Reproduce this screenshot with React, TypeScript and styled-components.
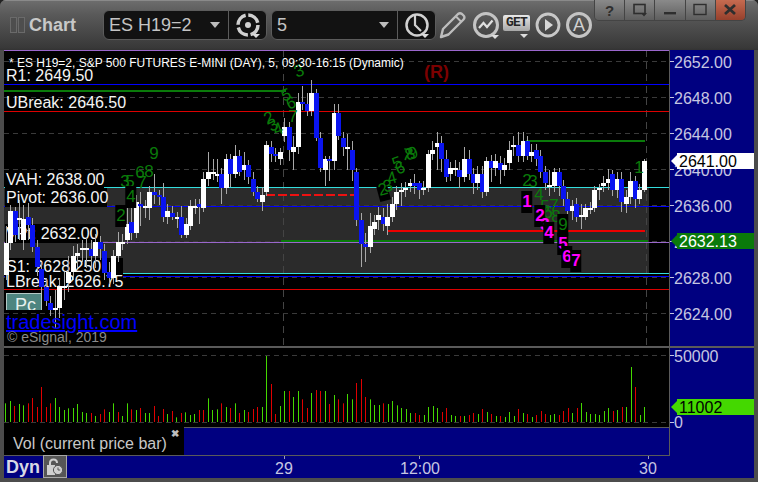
import React from "react";
import styled, { createGlobalStyle } from "styled-components";

const FONT = `"Liberation Sans", Arial, sans-serif`;
const OX = 4;
const OY = 50;

const Global = createGlobalStyle`
  html, body { margin: 0; padding: 0; background: #222; }
  body { font-family: ${FONT}; }
`;

const Frame = styled.div`
  position: relative;
  width: 758px;
  height: 482px;
  box-sizing: border-box;
  padding: 0 4px 4px;
  background: #4c4c4c;
  border-radius: 6px 6px 0 0;
  overflow: hidden;
  display: flex;
  flex-direction: column;
  font-family: ${FONT};
`;
const TitleBar = styled.div`
  height: 50px;
  margin: 0 -4px;
  padding: 0 0 0 10px;
  flex: none;
  display: flex;
  align-items: center;
  background: linear-gradient(#6e6e6e 0, #5a5a5a 14px, #383838 48px, #333 50px);
  box-shadow: inset 0 1px 0 #8a8a8a;
`;
const Grip = styled.span`
  width: 5px;
  height: 14px;
  margin-right: 1px;
  border: 1px solid #6a6a6a;
  background: #4e4e4e;
`;
const ChartTitle = styled.span`
  margin: 0 27px 0 3px;
  font-size: 18px;
  font-weight: 700;
  color: #c8c8c8;
`;
const Combo = styled.div<{ $w: number }>`
  width: ${(p) => p.$w}px;
  height: 30px;
  box-sizing: border-box;
  margin-right: 4px;
  flex: none;
  display: flex;
  align-items: center;
  background: #121212;
  border: 1px solid #5c5c5c;
  border-radius: 6px;
`;
const ComboText = styled.span`
  flex: 1;
  padding-left: 5px;
  font-size: 18px;
  color: #c4c4c4;
  white-space: nowrap;
`;
const ComboArrow = styled.span`
  width: 0;
  height: 0;
  margin-right: 8px;
  border-left: 5px solid transparent;
  border-right: 5px solid transparent;
  border-top: 6px solid #bdbdbd;
`;
const ComboIcon = styled.span`
  width: 37px;
  height: 28px;
  flex: none;
  border-left: 1px solid #5c5c5c;
  display: flex;
  align-items: center;
  justify-content: center;
`;
const ToolIcon = styled.svg<{ $ml?: number }>`
  flex: none;
  margin-left: ${(p) => p.$ml ?? 0}px;
`;
const GetWrap = styled.div`
  position: relative;
  width: 28px;
  height: 30px;
  margin-left: 1px;
  flex: none;
`;
const GetBadge = styled.span`
  position: absolute;
  left: 0;
  top: 5px;
  width: 27px;
  height: 16px;
  border-radius: 2px;
  background: linear-gradient(#e8e8e8, #a8a8a8);
  color: #262626;
  font: 700 13px/16px "Liberation Mono", monospace;
  letter-spacing: -0.8px;
  text-align: center;
`;
const GetArrow = styled.span`
  position: absolute;
  left: 17px;
  top: 24px;
  width: 0;
  height: 0;
  border-left: 4px solid transparent;
  border-right: 4px solid transparent;
  border-top: 4px solid #ddd;
`;
const AIcon = styled.div`
  position: relative;
  width: 26px;
  height: 26px;
  margin-left: 5px;
  flex: none;
  box-sizing: border-box;
  border: 3px solid #c4c4c4;
  border-radius: 50%;
  background: transparent;
  color: #d0d0d0;
  font-size: 18px;
  line-height: 20px;
  text-align: center;
`;
const WinButtons = styled.div`
  position: absolute;
  left: 594px;
  top: 0;
  width: 152px;
  height: 21px;
  display: flex;
  border-radius: 0 0 5px 5px;
  overflow: hidden;
  border: 1px solid #444;
  border-top: none;
  box-sizing: border-box;
`;
const WinBtn = styled.div<{ $close?: boolean }>`
  flex: 1;
  display: flex;
  align-items: center;
  justify-content: center;
  font-size: 15px;
  font-weight: 700;
  color: #2e2e2e;
  border-left: 1px solid #444;
  &:first-child { border-left: none; }
  background: ${(p) =>
    p.$close
      ? "linear-gradient(#c66b50, #96402c)"
      : "linear-gradient(#8a8a8a, #5e5e5e)"};
`;

const PriceRow = styled.div`
  display: flex;
  height: 296px;
  flex: none;
`;
const Canvas = styled.div`
  position: relative;
  width: 665px;
  height: 296px;
  flex: none;
  background: #000;
  overflow: hidden;
`;
const Layer = styled.svg`
  position: absolute;
  left: 0;
  top: 0;
`;
const Axis = styled.div`
  position: relative;
  flex: 1;
  background: #000080;
  border-left: 1px solid #5a5a5a;
`;
const AxisText = styled.span<{ $y: number }>`
  position: absolute;
  left: 4px;
  top: ${(p) => p.$y - 8}px;
  font-size: 16px;
  line-height: 18px;
  color: #c6c6e2;
`;
const AxisTick = styled.span<{ $y: number }>`
  position: absolute;
  left: 0;
  top: ${(p) => p.$y}px;
  width: 4px;
  height: 1px;
  background: #c6c6e2;
`;
const PriceTag = styled.div<{ $y: number; $bg: string; $fg: string }>`
  position: absolute;
  left: 7px;
  top: ${(p) => p.$y - 8}px;
  right: 0;
  height: 16px;
  padding-left: 2px;
  background: ${(p) => p.$bg};
  color: ${(p) => p.$fg};
  font-size: 16px;
  line-height: 18px;
  &::before {
    content: "";
    position: absolute;
    left: -6px;
    top: 2px;
    border-top: 6px solid transparent;
    border-bottom: 6px solid transparent;
    border-right: 6px solid ${(p) => p.$bg};
  }
`;
const ChartHeader = styled.div`
  position: absolute;
  left: 5px;
  top: 6px;
  font-size: 12px;
  line-height: 14px;
  color: #fff;
  white-space: nowrap;
`;
const RMark = styled.span`
  position: absolute;
  left: 420px;
  top: 12px;
  font-size: 18px;
  font-weight: 700;
  line-height: 20px;
  color: #7c0000;
`;
const LevelLabel = styled.span<{ $x: number; $y: number; $w: number; $h: number }>`
  position: absolute;
  left: ${(p) => p.$x}px;
  top: ${(p) => p.$y}px;
  width: ${(p) => p.$w}px;
  height: ${(p) => p.$h}px;
  padding-left: 1px;
  box-sizing: border-box;
  background: #000;
  color: #f4f4f4;
  font-size: 16px;
  line-height: ${(p) => p.$h + 1}px;
  white-space: nowrap;
`;
const PlainLabel = styled(LevelLabel)`
  background: transparent;
`;
const Digit = styled.span<{ $x: number; $y: number; $pink?: boolean; $rot?: number; $box?: boolean }>`
  position: absolute;
  left: ${(p) => p.$x}px;
  top: ${(p) => p.$y}px;
  transform: translate(-50%, -50%) rotate(${(p) => p.$rot ?? 0}deg);
  font-size: 17px;
  line-height: ${(p) => (p.$box ? 22 : 17)}px;
  padding: 0 ${(p) => (p.$box ? 1 : 0)}px;
  font-weight: ${(p) => (p.$pink ? 700 : 400)};
  color: ${(p) => (p.$pink ? "#ff00ff" : "#0a7a0a")};
  background: ${(p) => (p.$box ? "#000" : "transparent")};
`;
const PcButton = styled.div`
  position: absolute;
  left: 2px;
  top: 243px;
  width: 36px;
  height: 17px;
  box-sizing: border-box;
  background: #4e8580;
  border: 1px solid #b5c9c6;
  border-bottom: none;
  color: #e6f0ee;
  font-size: 18px;
  line-height: 22px;
  padding: 0 0 0 8px;
  overflow: hidden;
`;
const SiteLink = styled.span`
  position: absolute;
  left: 2px;
  top: 261px;
  font-size: 20px;
  line-height: 23px;
  color: #0000ff;
  text-decoration: underline;
`;
const Copyright = styled.span`
  position: absolute;
  left: 3px;
  top: 279px;
  font-size: 14px;
  line-height: 16px;
  color: #8a8a8a;
`;

const Separator = styled.div`
  height: 2px;
  flex: none;
  background: #5a5a5a;
`;
const VolumeRow = styled.div`
  display: flex;
  flex: none;
  height: 108px;
`;
const VolumeColumn = styled.div`
  width: 665px;
  flex: none;
  display: flex;
  flex-direction: column;
`;
const VolumeCanvas = styled.div`
  position: relative;
  height: 79px;
  flex: none;
  background: #000;
`;
const LegendRow = styled.div`
  flex: 1;
  display: flex;
  border-bottom: 1px solid #5a5a5a;
`;
const Legend = styled.div`
  position: relative;
  width: 180px;
  flex: none;
  background: #000;
  color: #c8c8c8;
  font-size: 16px;
  line-height: 20px;
  padding: 7px 0 0 9px;
  box-sizing: border-box;
`;
const LegendClose = styled.span`
  position: absolute;
  right: 5px;
  top: 1px;
  font-size: 10px;
  line-height: 12px;
  font-weight: 700;
  color: #bdbdbd;
`;
const LegendFill = styled.div`
  flex: 1;
  background: #000080;
  border-top: 1px solid #5a5a5a;
`;
const Footer = styled.div`
  position: relative;
  flex: 1;
  display: flex;
  align-items: center;
  background: #000080;
`;
const Dyn = styled.span`
  margin: 0 3px 0 2px;
  font-size: 18px;
  font-weight: 700;
  color: #d8d8e4;
`;
const LockButton = styled.div`
  width: 24px;
  height: 23px;
  margin-top: -1px;
  box-sizing: border-box;
  border: 1px solid #a8a8a8;
  background: #565656;
  display: flex;
  align-items: center;
  justify-content: center;
`;
const TimeLabel = styled.span<{ $x: number }>`
  position: absolute;
  left: ${(p) => p.$x}px;
  top: 3px;
  transform: translateX(-50%);
  font-size: 16px;
  line-height: 19px;
  color: #c6c6e2;
`;
const TimeTick = styled.span<{ $x: number }>`
  position: absolute;
  left: ${(p) => p.$x}px;
  top: 0;
  width: 1px;
  height: 3px;
  background: #9a9ac0;
`;

/* ---- data: page pixel coordinates ---- */
type C = [number, number, number, number, number, "w" | "b"];
const candles: C[] = [
  [4, 243, 275, 226, 280, "w"], [8, 211, 243, 205, 250, "w"], [13, 211, 235, 207, 242, "b"],
  [17, 218, 220, 200, 240, "w"], [21, 219, 240, 205, 250, "w"], [26, 217, 225, 203, 240, "b"],
  [30, 225, 247, 218, 252, "b"], [35, 247, 267, 240, 276, "b"], [39, 269, 287, 262, 296, "b"],
  [44, 287, 301, 278, 306, "b"], [48, 303, 310, 296, 316, "b"], [53, 308, 310, 290, 328, "w"],
  [57, 286, 308, 280, 318, "w"], [62, 286, 287, 272, 300, "w"], [66, 272, 283, 256, 292, "w"],
  [71, 256, 272, 246, 280, "w"], [75, 253, 256, 244, 268, "w"], [80, 248, 250, 240, 262, "w"],
  [84, 248, 250, 238, 268, "w"], [89, 249, 256, 240, 268, "b"], [93, 242, 256, 234, 268, "w"],
  [98, 242, 249, 236, 260, "b"], [102, 251, 273, 244, 280, "b"], [107, 272, 278, 262, 284, "b"],
  [111, 256, 278, 250, 284, "w"], [116, 242, 256, 232, 262, "w"], [120, 242, 243, 234, 250, "w"],
  [125, 224, 240, 206, 244, "w"], [129, 222, 233, 204, 240, "b"], [134, 202, 233, 195, 238, "w"],
  [138, 204, 206, 192, 226, "b"], [143, 206, 208, 200, 218, "w"], [147, 192, 208, 186, 220, "w"],
  [152, 192, 195, 174, 204, "b"], [157, 195, 197, 190, 205, "b"], [161, 197, 217, 183, 222, "b"],
  [165, 211, 217, 204, 224, "w"], [170, 213, 217, 206, 220, "b"], [175, 217, 219, 212, 228, "w"],
  [179, 217, 235, 206, 238, "b"], [184, 224, 235, 218, 238, "w"], [188, 206, 226, 200, 230, "w"],
  [193, 206, 207, 199, 214, "w"], [197, 204, 207, 199, 224, "b"], [201, 179, 208, 172, 212, "w"],
  [206, 172, 179, 152, 186, "w"], [211, 172, 174, 159, 180, "w"], [215, 174, 176, 159, 182, "w"],
  [219, 174, 188, 168, 204, "b"], [224, 159, 188, 154, 194, "w"], [228, 159, 174, 154, 187, "b"],
  [233, 156, 174, 145, 178, "w"], [237, 156, 172, 150, 176, "b"], [242, 165, 170, 152, 180, "w"],
  [246, 165, 177, 160, 184, "b"], [251, 179, 192, 172, 196, "b"], [255, 192, 199, 186, 202, "b"],
  [260, 195, 202, 187, 211, "w"], [264, 145, 192, 141, 196, "w"], [269, 147, 154, 141, 162, "b"],
  [273, 154, 156, 148, 162, "b"], [278, 152, 159, 148, 165, "w"], [282, 127, 136, 118, 142, "w"],
  [287, 127, 150, 122, 161, "b"], [291, 147, 152, 136, 170, "w"], [296, 102, 147, 93, 154, "w"],
  [300, 102, 104, 86, 110, "b"], [305, 104, 111, 93, 116, "b"], [309, 93, 111, 80, 116, "w"],
  [314, 93, 138, 89, 141, "b"], [318, 138, 168, 132, 172, "b"], [323, 159, 170, 156, 186, "w"],
  [327, 159, 161, 156, 181, "b"], [332, 113, 161, 104, 170, "w"], [336, 113, 136, 104, 140, "b"],
  [341, 138, 147, 132, 156, "b"], [345, 147, 149, 134, 170, "w"], [350, 150, 170, 141, 181, "b"],
  [354, 172, 220, 168, 226, "b"], [359, 220, 244, 213, 267, "b"], [363, 244, 247, 233, 262, "b"],
  [368, 226, 247, 213, 253, "w"], [372, 222, 229, 215, 235, "w"], [376, 215, 220, 207, 230, "w"],
  [381, 217, 224, 208, 231, "b"], [385, 217, 226, 204, 235, "w"], [390, 204, 217, 197, 222, "w"],
  [394, 192, 204, 186, 210, "w"], [399, 190, 192, 183, 206, "w"], [403, 188, 190, 182, 197, "w"],
  [408, 183, 186, 179, 192, "w"], [412, 183, 186, 174, 194, "b"], [417, 183, 190, 181, 199, "b"],
  [421, 188, 190, 181, 195, "w"], [426, 154, 188, 150, 192, "w"], [430, 150, 154, 141, 160, "w"],
  [435, 143, 147, 132, 170, "w"], [439, 143, 159, 136, 172, "b"], [444, 159, 177, 150, 182, "b"],
  [448, 168, 174, 162, 181, "w"], [453, 168, 170, 160, 176, "w"], [457, 170, 177, 162, 188, "b"],
  [462, 159, 177, 147, 182, "w"], [467, 159, 174, 150, 180, "b"], [471, 174, 183, 168, 194, "b"],
  [475, 174, 183, 166, 190, "w"], [480, 174, 192, 166, 198, "b"], [484, 161, 192, 157, 196, "w"],
  [489, 161, 168, 155, 182, "b"], [493, 161, 168, 154, 176, "w"], [498, 163, 170, 156, 184, "b"],
  [502, 165, 170, 158, 176, "w"], [507, 150, 163, 141, 170, "w"], [511, 145, 147, 136, 156, "w"],
  [516, 145, 156, 132, 162, "b"], [521, 141, 156, 132, 162, "w"], [525, 141, 156, 136, 160, "b"],
  [529, 152, 156, 144, 162, "w"], [534, 150, 159, 144, 166, "b"], [538, 156, 172, 150, 178, "b"],
  [543, 172, 183, 166, 190, "b"], [547, 185, 187, 170, 196, "w"], [552, 172, 186, 168, 192, "w"],
  [557, 172, 186, 168, 196, "b"], [561, 186, 199, 180, 206, "b"], [565, 199, 211, 192, 218, "b"],
  [570, 206, 211, 200, 220, "w"], [574, 204, 217, 198, 222, "b"], [579, 215, 217, 204, 229, "w"],
  [583, 208, 217, 204, 220, "w"], [588, 208, 209, 202, 214, "w"], [592, 190, 208, 186, 212, "w"],
  [597, 188, 190, 184, 200, "w"], [601, 183, 186, 176, 192, "w"], [606, 179, 183, 169, 190, "w"],
  [610, 174, 190, 170, 196, "b"], [615, 179, 190, 172, 198, "w"], [619, 179, 202, 172, 212, "b"],
  [624, 197, 204, 190, 213, "w"], [628, 181, 197, 172, 204, "w"], [633, 181, 199, 176, 208, "b"],
  [637, 190, 199, 184, 204, "w"], [642, 161, 190, 159, 192, "w"],
];

const volA = "g190 g183 r198 g192 g196 r190 r174 r201 r141 r201 r190 g174 g201 g210 g205 g204 g192 g216 g219 r219 g228 r222 r208 g216 g190 r216 g228 g190 r208 g210 r204 g219 g219 r198 r228 r207 g222 r213 g232 r219 g217 g225 g222 r210 r210 g175 g210 g208 r190 g201 r204 g190 r219 g210 r216 r207 r201 g201 g48 r132 r222 g198 g153 r153 g171 g153 r178 r204 g159 r150 r153 g153 r192 g165 r178 r190 g162 g178 r129 r117 r171 g178 g195";
const volB = "g195 r190 g192 g183 g196 g204 g207 g219 r219 r225 g225 g201 g198 g204 r216 r204 g225 g228 r228 g228 r225 r219 g222 r207 g216 r222 g228 r228 g231 g216 g228 r207 g219 r222 g231 r225 r213 r222 g225 g222 r225 r213 r204 g219 r204 g189 g216 g222 g222 g225 g213 g204 r213 g210 r201 g201 g81 r141 g225 g201";
const volBars = [...volA.split(" "), ...volB.split(" ")].map((s, i) => ({
  x: Math.round(5.2 + 4.5 * i),
  red: s[0] === "r",
  h: (246 - Number(s.slice(1))) / 3,
}));

type D = { t: string; x: number; y: number; pink?: boolean; rot?: number; box?: boolean };
const digits: D[] = [
  { t: "3", x: 299, y: 71, rot: -20 },
  { t: "5", x: 286, y: 95, rot: -20 }, { t: "6", x: 291, y: 103, rot: -20 }, { t: "7", x: 293, y: 116 },
  { t: "2", x: 269, y: 118, rot: -25 }, { t: "3", x: 273, y: 125, rot: -25 }, { t: "4", x: 278, y: 129, rot: -20 },
  { t: "2", x: 121, y: 216, box: true }, { t: "3", x: 125, y: 181 }, { t: "5", x: 130, y: 181 }, { t: "4", x: 131, y: 197, box: true },
  { t: "6", x: 140, y: 172 }, { t: "7", x: 142, y: 182 }, { t: "8", x: 149, y: 171 }, { t: "9", x: 154, y: 153 },
  { t: "2", x: 383, y: 190, box: true, rot: -15 }, { t: "3", x: 388, y: 186, rot: -15 }, { t: "4", x: 392, y: 178, rot: -15 },
  { t: "5", x: 397, y: 163, rot: -20 }, { t: "6", x: 400, y: 168, rot: -20 }, { t: "7", x: 407, y: 155, rot: 10 },
  { t: "8", x: 410, y: 154, rot: -20 }, { t: "9", x: 413, y: 153, rot: -20 },
  { t: "2", x: 527, y: 180 }, { t: "3", x: 533, y: 181 }, { t: "4", x: 539, y: 194 },
  { t: "1", x: 527, y: 202, pink: true, box: true },
  { t: "5", x: 545, y: 206 }, { t: "7", x: 554, y: 205 }, { t: "6", x: 548, y: 212 }, { t: "8", x: 556, y: 216 },
  { t: "2", x: 540, y: 216, pink: true, box: true }, { t: "3", x: 545, y: 224, pink: true },
  { t: "4", x: 549, y: 233, pink: true, box: true }, { t: "9", x: 563, y: 225, box: true },
  { t: "5", x: 563, y: 244, pink: true, box: true }, { t: "6", x: 567, y: 257, pink: true, box: true },
  { t: "7", x: 576, y: 261, pink: true, box: true }, { t: "1", x: 639, y: 167 },
];

const gridY = [62, 98, 134, 170, 206, 242, 278, 314];
const axisPrices = ["2652.00", "2648.00", "2644.00", "2640.00", "2636.00", "2632.00", "2628.00", "2624.00"];

const Hl = ({ y, x1, x2, c, w = 1, dash }: { y: number; x1: number; x2: number; c: string; w?: number; dash?: string }) => (
  <line x1={x1} x2={x2} y1={y + (w === 1 ? 0.5 : 1)} y2={y + (w === 1 ? 0.5 : 1)} stroke={c} strokeWidth={w} strokeDasharray={dash} />
);

const Chevron = ({ x, y }: { x: number; y: number }) => (
  <polygon points={`${x - 4},${y} ${x + 4},${y} ${x},${y + 4}`} fill="#ddd" />
);

export default function App() {
  const vb = `${OX} ${OY} 665 296`;
  return (
    <Frame>
      <Global />
      <TitleBar>
        <Grip />
        <Grip />
        <ChartTitle>Chart</ChartTitle>
        <Combo $w={164}>
          <ComboText>ES H19=2</ComboText>
          <ComboArrow />
          <ComboIcon>
            <svg width="32" height="28" viewBox="0 0 32 28">
              <circle cx="16" cy="14" r="10" fill="none" stroke="#d0d0d0" strokeWidth="3.5" strokeDasharray="13 2.7" />
              <circle cx="16" cy="14" r="3" fill="#d0d0d0" />
              <Chevron x={24} y={23} />
            </svg>
          </ComboIcon>
        </Combo>
        <Combo $w={165}>
          <ComboText>5</ComboText>
          <ComboArrow />
          <ComboIcon>
            <svg width="32" height="28" viewBox="0 0 32 28">
              <circle cx="16" cy="14" r="10.5" fill="none" stroke="#d0d0d0" strokeWidth="2.5" />
              <path d="M14 5 L14 14 L20 20" fill="none" stroke="#d0d0d0" strokeWidth="2.2" />
              <Chevron x={24} y={23} />
            </svg>
          </ComboIcon>
        </Combo>
        <ToolIcon width="28" height="28" viewBox="0 0 28 28" $ml={-2}>
          <path d="M3 26 L5 18 L20 3 Q22 1.5 24 3 L26 5 Q27 7 25.5 8.5 L10.5 23.5 Z" fill="none" stroke="#bdbdbd" strokeWidth="2.4" strokeLinejoin="round" />
          <path d="M18 5.5 L23.5 11" stroke="#bdbdbd" strokeWidth="2" />
        </ToolIcon>
        <ToolIcon width="32" height="32" viewBox="0 0 32 32" $ml={4}>
          <circle cx="16" cy="16" r="11.5" fill="none" stroke="#c4c4c4" strokeWidth="3" />
          <path d="M9 19 L13.5 14 L17 18 L22.5 11.5" fill="none" stroke="#e0e0e0" strokeWidth="2.2" />
          <Chevron x={25} y={26} />
        </ToolIcon>
        <GetWrap>
          <GetBadge>GET</GetBadge>
          <GetArrow />
        </GetWrap>
        <ToolIcon width="26" height="26" viewBox="0 0 26 26" $ml={4}>
          <circle cx="13" cy="13" r="11" fill="none" stroke="#c8c8c8" strokeWidth="2.8" />
          <polygon points="10,7 18,13 10,19" fill="#d8d8d8" />
        </ToolIcon>
        <AIcon>A</AIcon>
      </TitleBar>
      <WinButtons>
        <WinBtn>?</WinBtn>
        <WinBtn>
          <svg width="16" height="16" viewBox="0 0 16 16">
            <rect x="2" y="2.5" width="11" height="9" fill="none" stroke="#2e2e2e" strokeWidth="1.6" />
            <polygon points="9,11 15,11 12,14.5" fill="#2e2e2e" />
          </svg>
        </WinBtn>
        <WinBtn>
          <svg width="16" height="16" viewBox="0 0 16 16">
            <rect x="2" y="10" width="12" height="2.4" fill="#2e2e2e" />
          </svg>
        </WinBtn>
        <WinBtn>
          <svg width="16" height="16" viewBox="0 0 16 16">
            <rect x="2" y="2.5" width="12" height="10" fill="none" stroke="#2e2e2e" strokeWidth="1.4" />
          </svg>
        </WinBtn>
        <WinBtn $close>
          <svg width="16" height="16" viewBox="0 0 16 16">
            <path d="M3 3 L13 12 M13 3 L3 12" stroke="#2e2e2e" strokeWidth="2.8" />
          </svg>
        </WinBtn>
      </WinButtons>

      <PriceRow>
        <Canvas>
          <Layer width="665" height="296" viewBox={vb}>
            <rect x="4" y="187" width="645" height="87" fill="#2b2b2b" />
            {gridY.map((y) => (
              <Hl key={y} y={y - 1} x1={4} x2={669} c="#3a3a3a" dash="5 4" />
            ))}
            <line x1="283.5" x2="283.5" y1="50" y2="346" stroke="#444" strokeDasharray="7 5" />
            <line x1="646.5" x2="646.5" y1="50" y2="346" stroke="#444" strokeDasharray="7 5" />
            <Hl y={50} x1={4} x2={669} c="#9a66cc" />
            <Hl y={84} x1={4} x2={669} c="#0000ff" />
            <Hl y={90} x1={4} x2={286} c="#0a7a0a" w={2} />
            <Hl y={111} x1={4} x2={669} c="#dd0000" />
            <Hl y={140} x1={526} x2={645} c="#0a7a0a" w={2} />
            <Hl y={187} x1={4} x2={669} c="#33dddd" />
            <Hl y={194} x1={266} x2={360} c="#ee1111" w={2} dash="9 3" />
            <Hl y={206} x1={4} x2={669} c="#0000ff" />
            <Hl y={230} x1={387} x2={645} c="#ee0000" w={2} />
            <Hl y={240} x1={281} x2={648} c="#0a7a0a" w={2} />
            <Hl y={242} x1={4} x2={669} c="#9a66cc" />
            <Hl y={273} x1={4} x2={669} c="#33dddd" />
            <Hl y={276} x1={4} x2={669} c="#0000ff" />
            <Hl y={289} x1={4} x2={669} c="#dd0000" />
          </Layer>

          <PlainLabel $x={1} $y={16} $w={120} $h={18}>R1: 2649.50</PlainLabel>
          <PlainLabel $x={1} $y={43} $w={140} $h={18}>UBreak: 2646.50</PlainLabel>
          <LevelLabel $x={1} $y={121} $w={99} $h={17}>VAH: 2638.00</LevelLabel>
          <LevelLabel $x={1} $y={138} $w={102} $h={19}>Pivot: 2636.00</LevelLabel>
          <LevelLabel $x={1} $y={174} $w={95} $h={19}>VPt: 2632.00</LevelLabel>
          <LevelLabel $x={1} $y={208} $w={118} $h={17}>S1: 2628.250</LevelLabel>
          <LevelLabel $x={1} $y={224} $w={118} $h={15}>LBreak: 2626.75</LevelLabel>

          <Layer width="665" height="296" viewBox={vb}>
            {candles.map(([x, t, b, wt, wb, c], i) => (
              <g key={i}>
                <rect x={x + 2} y={wt} width={1} height={wb - wt} fill="#a8a8a8" />
                <rect x={x} y={t} width={5} height={Math.max(b - t, 2)} fill={c === "w" ? "#fff" : "#0a14f0"} />
              </g>
            ))}
          </Layer>

          {digits.map((d, i) => (
            <Digit key={i} $x={d.x - OX} $y={d.y - OY} $pink={d.pink} $rot={d.rot} $box={d.box}>
              {d.t}
            </Digit>
          ))}

          <ChartHeader>* ES H19=2, S&amp;P 500 FUTURES E-MINI (DAY), 5, 09:30-16:15 (Dynamic)</ChartHeader>
          <RMark>(R)</RMark>
          <PcButton>Pc</PcButton>
          <SiteLink>tradesight.com</SiteLink>
          <Copyright>© eSignal, 2019</Copyright>
        </Canvas>
        <Axis>
          {axisPrices.map((p, i) => (
            <React.Fragment key={p}>
              <AxisTick $y={gridY[i] - OY - 1} />
              <AxisText $y={gridY[i] - OY}>{p}</AxisText>
            </React.Fragment>
          ))}
          <PriceTag $y={111} $bg="#ffffff" $fg="#000000">2641.00</PriceTag>
          <PriceTag $y={191} $bg="#0a7a0a" $fg="#ffffff">2632.13</PriceTag>
        </Axis>
      </PriceRow>
      <Separator />
      <VolumeRow>
        <VolumeColumn>
          <VolumeCanvas>
            <Layer width="665" height="79" viewBox={`${OX} 348 665 79`}>
              <Hl y={355} x1={4} x2={669} c="#3a3a3a" dash="5 4" />
              <Hl y={422} x1={4} x2={669} c="#3a3a3a" dash="5 4" />
              {volBars.map((b, i) => (
                <rect key={i} x={b.x} y={422 - b.h} width={1} height={b.h} fill={b.red ? "#e00000" : "#44d800"} />
              ))}
            </Layer>
          </VolumeCanvas>
          <LegendRow>
            <Legend>
              Vol (current price bar)
              <LegendClose>✖</LegendClose>
            </Legend>
            <LegendFill />
          </LegendRow>
        </VolumeColumn>
        <Axis>
          <AxisTick $y={7} />
          <AxisText $y={8}>50000</AxisText>
          <AxisTick $y={74} />
          <AxisText $y={74}>0</AxisText>
          <PriceTag $y={59} $bg="#44d800" $fg="#000000">11002</PriceTag>
        </Axis>
      </VolumeRow>
      <Footer>
        <Dyn>Dyn</Dyn>
        <LockButton>
          <svg width="20" height="20" viewBox="0 0 20 20">
            <path d="M3 18 V9 H10 M5 9 V6 Q5 2.5 8.5 2.5 Q12 2.5 12 6" fill="none" stroke="#cfcfcf" strokeWidth="2" />
            <rect x="3" y="9" width="7" height="9" fill="#cfcfcf" />
            <circle cx="13" cy="13" r="4.6" fill="#cfcfcf" stroke="#565656" />
            <path d="M13 10.5 V13 H15.2" fill="none" stroke="#565656" />
          </svg>
        </LockButton>
        <TimeTick $x={280} />
        <TimeLabel $x={280}>29</TimeLabel>
        <TimeTick $x={415} />
        <TimeLabel $x={416}>12:00</TimeLabel>
        <TimeTick $x={644} />
        <TimeLabel $x={644}>30</TimeLabel>
      </Footer>
    </Frame>
  );
}
